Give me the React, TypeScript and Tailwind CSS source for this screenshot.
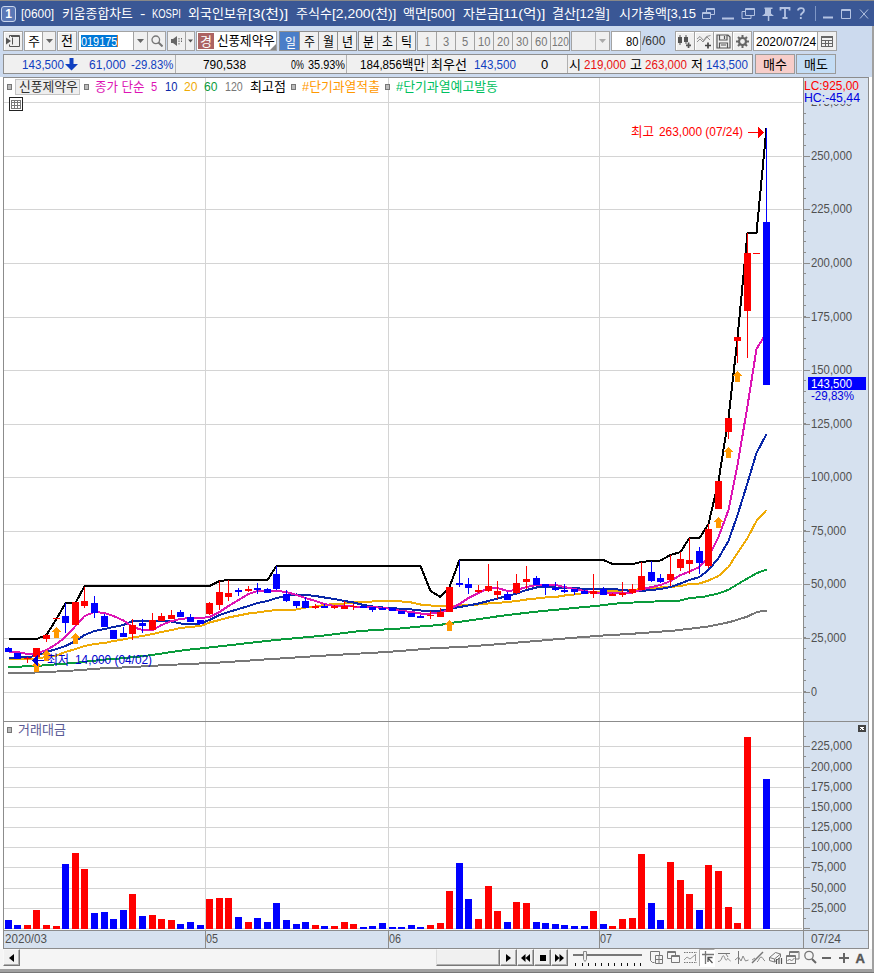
import React, { useLayoutEffect, useRef, useState } from 'react';
import { clsx } from 'clsx';

// Text squeezed or stretched to the width of its box, the way the fixed-pitch UI font sets it
function Fit({ className, children }: { className: string; children: string }) {
  const box = useRef<HTMLSpanElement>(null);
  const inner = useRef<HTMLSpanElement>(null);
  const [scale, setScale] = useState(1);

  useLayoutEffect(() => {
    if (box.current && inner.current) {
      setScale(box.current.clientWidth / inner.current.offsetWidth);
    }
  }, [children]);

  return (
    <span ref={box} className={clsx('block shrink-0 whitespace-pre', className)}>
      <span ref={inner} className="inline-block origin-left" style={{ transform: `scaleX(${scale})` }}>{children}</span>
    </span>
  );
}

const btn = 'flex items-center justify-center shrink-0 border border-[#a3a3a3] bg-[#f0f0f0] shadow-[inset_1px_1px_0_#fff]';

function Caret({ className }: { className?: string }) {
  return (
    <svg width="7" height="4" viewBox="0 0 7 4" className={clsx('shrink-0', className)}>
      <path d="M0 0h7L3.5 4z" fill="currentColor" />
    </svg>
  );
}

function TitleBar() {
  return (
    <div className="h-[25px] shrink-0 bg-[#3a5795] flex items-center text-white text-[13px] leading-[24px]">
      <div className="ml-[1px] w-[15px] h-[16px] mt-[1px] shrink-0 rounded-[3px] border border-[#c9d5ec] bg-[#5b78b6] flex items-center justify-center text-[12px] leading-none font-bold">1</div>
      <div className="flex ml-[5px] w-[676px] overflow-hidden shrink-0">
        <Fit className="w-[33px]">[0600]</Fit>
        <Fit className="ml-[8px] w-[71px]">키움종합차트</Fit>
        <Fit className="ml-[7px] w-[5px]">-</Fit>
        <Fit className="ml-[7px] w-[29px]">KOSPI</Fit>
        <Fit className="ml-[7px] w-[60px]">외국인보유</Fit>
        <Fit className="w-[40px]">[3(천)]</Fit>
        <Fit className="ml-[8px] w-[36px]">주식수</Fit>
        <Fit className="w-[64px]">[2,200(천)]</Fit>
        <Fit className="ml-[7px] w-[24px]">액면</Fit>
        <Fit className="w-[28px]">[500]</Fit>
        <Fit className="ml-[8px] w-[36px]">자본금</Fit>
        <Fit className="w-[46px]">[11(억)]</Fit>
        <Fit className="ml-[7px] w-[24px]">결산</Fit>
        <Fit className="w-[34px]">[12월]</Fit>
        <Fit className="ml-[9px] w-[48px]">시가총액</Fit>
        <Fit className="w-[29px]">[3,15</Fit>
      </div>
      <svg width="174" height="22" viewBox="698 3 174 22" className="ml-[1px] shrink-0" fill="none" stroke="#b4c3e2" strokeWidth="1">
        <path d="M706.5 12.5v-4h8v6h-4M706.5 9.5h8M702.5 12.5h8v6h-8zM702.5 13.5h8" />
        <path d="M722 18.5h12" strokeWidth="2" />
        <path d="M745.500 8.500h9v7h-9zM745.500 9.500h9M745 11.500h-3v7h9v-3" />
        <path d="M764 7.500h8v1.500h-1.500v4.500l3 2.500h-12l3-2.500V9H764zM767.300 15h1.500v6h-1.500z" fill="#b4c3e2" stroke="none" transform="translate(.5 0)" />
        <path d="M780.500 10.500v-2.500h9v2.500M785 8v10M782.500 18h5" strokeWidth="1.800" />
        <path d="M798 10.500c0-3 6-3.500 6 0 0 2.500-3.200 2.500-3.200 5M800.800 17v2" strokeWidth="1.800" />
        <path d="M815.500 6v15" stroke="#7f97c6" />
        <path d="M823 17.500h10" strokeWidth="2" />
        <path d="M841.500 9.500h9v9h-9zM841.500 10.500h9" />
        <path d="M860 9.500l8 9M868 9.500l-8 9" />
      </svg>
    </div>
  );
}

const periods = ['일', '주', '월', '년'];
const units = ['분', '초', '틱'];
const minutes = [
  { label: '1', w: 'w-[5px]' },
  { label: '3', w: 'w-[6px]' },
  { label: '5', w: 'w-[6px]' },
  { label: '10', w: 'w-[12px]' },
  { label: '20', w: 'w-[12px]' },
  { label: '30', w: 'w-[12px]' },
  { label: '60', w: 'w-[12px]' },
  { label: '120', w: 'w-[17px]' },
];

function Toolbar() {
  return (
    <div className="flex items-center h-[20px] ml-[3px] text-[13px] leading-[20px] text-black">
      <div className={clsx(btn, 'w-[20px] h-[20px]')}>
        <svg width="16" height="14" viewBox="0 0 16 14" fill="none" stroke="#555">
          <path d="M4.500 3.500v-2h10v11h-10v-2M6 2.500h8M7.500 3.500v7" />
          <path d="M1 3.500l5 3.500-5 3.500z" fill="#555" stroke="none" />
        </svg>
      </div>
      <div className="ml-[1px] flex h-[20px] w-[32px] border border-[#a3a3a3] bg-white">
        <Fit className="ml-[3px] w-[12px]">주</Fit>
        <div className="ml-auto w-[13px] bg-[#f0f0f0] border-l border-[#a3a3a3] flex items-center justify-center"><Caret className="text-[#666]" /></div>
      </div>
      <div className={clsx(btn, 'ml-[1px] w-[20px] h-[20px]')}>
        <Fit className="w-[12px]">전</Fit>
      </div>
      <div className="ml-[1px] flex items-center h-[20px] w-[88px] border border-[#a3a3a3] bg-white">
        <div className="ml-[2px] h-[12px] leading-[13px] bg-[#0078d7] text-white border-r border-[#e08030]"><Fit className="w-[36px]">019175</Fit></div>
        <div className="ml-auto w-[14px] h-full bg-[#f0f0f0] border-l border-[#a3a3a3] flex items-center justify-center"><Caret className="text-[#666]" /></div>
        <div className="w-[18px] h-full bg-[#f0f0f0] border-l border-[#a3a3a3] flex items-center justify-center">
          <svg width="12" height="12" viewBox="0 0 12 12" fill="none" stroke="#777" strokeWidth="1.300"><circle cx="4.800" cy="4.800" r="3.800" /><path d="M7.500 7.500l4 4" strokeWidth="2" /></svg>
        </div>
      </div>
      <div className="ml-[1px] flex h-[20px] w-[28px] border border-[#a3a3a3] bg-[#f0f0f0]">
        <div className="w-[17px] flex items-center justify-center">
          <svg width="12" height="10" viewBox="0 0 12 10" fill="#666"><path d="M0 3h2l4-3v10L2 7H0zM7.500 2h1v1.500h-1zM7.500 4.500h1V6h-1zM7.500 7h1v1.500h-1zM10 2h1v1.500h-1zM10 4.500h1V6h-1z" /></svg>
        </div>
        <div className="flex-1 border-l border-[#a3a3a3] flex items-center justify-center"><Caret className="text-[#555] w-[5px]" /></div>
      </div>
      <div className="relative ml-[1px] flex items-center h-[20px] w-[81px] border border-[#a3a3a3] bg-white">
        <div className="ml-px w-[16px] h-[16px] leading-[17px] bg-[#ac6363] text-white flex justify-center"><Fit className="w-[12px]">경</Fit></div>
        <Fit className="ml-[3px] w-[58px] -mt-px">신풍제약우</Fit>
        <span className="absolute right-0 bottom-0 border-l-[6px] border-l-transparent border-b-[6px] border-b-[#888]" />
      </div>
      <div className="ml-[2px] flex h-[20px] border border-[#8f8f8f]">
        {periods.map((p, i) => (
          <div key={p} className={clsx('h-full w-[19px] flex justify-center border-l', i === 0 ? 'bg-[#4a7ec8] text-white border-[#4a7ec8] pt-px' : 'bg-[#f0f0f0] border-[#8f8f8f]')}>
            <Fit className="w-[11px]">{p}</Fit>
          </div>
        ))}
      </div>
      <div className="ml-px flex h-[20px] border border-l-0 border-[#8f8f8f]">
        {units.map(u => (
          <div key={u} className="h-full w-[19px] flex justify-center border-l border-[#8f8f8f] bg-[#f0f0f0]">
            <Fit className="w-[11px]">{u}</Fit>
          </div>
        ))}
      </div>
      <div className="ml-px flex h-[20px] border border-l-0 border-[#8f8f8f]">
        {minutes.map(m => (
          <div key={m.label} className="h-full w-[19px] flex justify-center border-l border-[#a3a3a3] bg-[#f0f0f0] text-[#777]">
            <Fit className={m.w}>{m.label}</Fit>
          </div>
        ))}
      </div>
      <div className="ml-px flex h-[20px] w-[39px] border border-[#a3a3a3] bg-[#f0f0f0]">
        <div className="ml-auto w-[14px] border-l border-[#b8b8b8] flex items-center justify-center"><Caret className="text-[#aaa]" /></div>
      </div>
      <div className="ml-px h-[20px] w-[30px] border border-[#a3a3a3] bg-white flex justify-end pr-[2px]">
        <Fit className="w-[12px]">80</Fit>
      </div>
      <Fit className="ml-px w-[23px] text-[#333]">/600</Fit>
      <div className="ml-[10px] flex h-[20px]">
        <div className={clsx(btn, 'w-[20px]')}>
          <svg width="16" height="15" viewBox="0 0 16 15" fill="#555"><path d="M1 3h4v6H1zM2.500 1h1v10h-1zM7 3h4v5H7zM8.500 1h1v9h-1zM9 10.500h5v1.700H9zM10.700 8.500h1.700v5.500h-1.700z" /></svg>
        </div>
        <div className={clsx(btn, '-ml-px w-[20px]')}>
          <svg width="16" height="15" viewBox="0 0 16 15" fill="none" stroke="#777"><path d="M1 5l3-2.500 3.500 4 3-4 4-1M1 8l3-3 3 3 4-5 3 3" strokeWidth=".8" /><path d="M9 11.500h6M12 8.500v6" stroke="#444" strokeWidth="1.700" /></svg>
        </div>
        <div className={clsx(btn, '-ml-px w-[20px]')}>
          <svg width="15" height="15" viewBox="0 0 15 15" fill="none" stroke="#555" strokeWidth="1.200"><path d="M1 1h11l2 2v11H1zM3.500 1v5h7.500V1M3.500 14V9h8v5M5 11h5M8.500 2v3" /></svg>
        </div>
        <div className={clsx(btn, '-ml-px w-[20px]')}>
          <svg width="13" height="13" viewBox="0 0 13 13" fill="none" stroke="#666"><circle cx="6.500" cy="6.500" r="3.500" strokeWidth="2.200" /><path d="M6.500 0v3M6.500 10v3M0 6.500h3M10 6.500h3M2 2l2 2M9 9l2 2M2 11l2-2M9 4l2-2" strokeWidth="2" /></svg>
        </div>
      </div>
      <div className="ml-px flex h-[20px] w-[84px] border border-[#a3a3a3] bg-white">
        <Fit className="ml-[2px] w-[60px]">2020/07/24</Fit>
        <div className="ml-auto w-[19px] bg-[#f0f0f0] border-l border-[#a3a3a3] flex items-center justify-center">
          <svg width="12" height="11" viewBox="0 0 12 11" fill="none" stroke="#666" shapeRendering="crispEdges"><path d="M.5 1.500h11v9H.5zM.5 4.500h11M.5 7.500h11M4.500 4v6M7.500 4v6" /><path d="M0 1h12" strokeWidth="2" /></svg>
        </div>
      </div>
    </div>
  );
}

function QuoteRow() {
  return (
    <div className="flex h-[20px] ml-[3px] mt-[3px] text-[13px] leading-[20px] text-black">
      <div className="flex w-[750px] h-[20px] border border-[#8f8f8f] bg-[#f0f0f0]">
        <div className="flex w-[172px] border-r border-[#b0b0b0] text-[#1040c0]">
          <Fit className="ml-[18px] w-[42px]">143,500</Fit>
          <svg width="13" height="13" viewBox="0 0 13 13" className="ml-px mt-[3px] shrink-0"><path d="M4.500 0h4v6H13L6.500 12.500 0 6h4.500z" fill="#1040c0" /></svg>
          <Fit className="ml-[11px] w-[37px]">61,000</Fit>
          <Fit className="ml-[5px] w-[42px]">-29.83%</Fit>
        </div>
        <div className="flex w-[171px] border-r border-[#b0b0b0]">
          <Fit className="ml-[27px] w-[43px]">790,538</Fit>
          <Fit className="ml-[45px] w-[13px]">0%</Fit>
          <Fit className="ml-[4px] w-[37px]">35.93%</Fit>
        </div>
        <div className="flex w-[81px] border-r border-[#b0b0b0]">
          <Fit className="ml-[13px] w-[42px]">184,856</Fit>
          <Fit className="w-[23px]">백만</Fit>
        </div>
        <div className="flex w-[140px] border-r border-[#b0b0b0]">
          <Fit className="ml-[3px] w-[36px]">최우선</Fit>
          <Fit className="ml-[7px] w-[42px] text-[#1040c0]">143,500</Fit>
          <Fit className="ml-[25px] w-[7px]">0</Fit>
        </div>
        <div className="flex flex-1">
          <Fit className="ml-[1px] w-[12px]">시</Fit>
          <Fit className="ml-[3px] w-[42px] text-[#e81010]">219,000</Fit>
          <Fit className="ml-[4px] w-[12px]">고</Fit>
          <Fit className="ml-[3px] w-[42px] text-[#e81010]">263,000</Fit>
          <Fit className="ml-[4px] w-[12px]">저</Fit>
          <Fit className="ml-[3px] w-[42px] text-[#1040c0]">143,500</Fit>
        </div>
      </div>
      <div className="ml-[2px] w-[40px] h-[20px] border border-[#9a9a9a] bg-[#f7cdc9] flex justify-center"><Fit className="w-[24px]">매수</Fit></div>
      <div className="ml-px w-[40px] h-[20px] border border-[#9a9a9a] bg-[#c4ddf5] flex justify-center"><Fit className="w-[24px]">매도</Fit></div>
    </div>
  );
}

const UP = '#ff0000';
const DOWN = '#0000ff';

type Candle = [up: number, top: number, bottom: number, high: number, low: number, volumeTop: number];

// up?, body top/bottom, wick top/bottom, volume bar top
const candles: Candle[] = [
  [0, 648, 652, 647, 652, 920], [0, 653, 659, 653, 659, 925], [1, 658, 659, 657, 663, 925], [1, 648, 657, 648, 657, 910],
  [1, 635, 639, 634, 642, 925], [1, 618, 619, 618, 619, 926], [0, 616, 623, 603, 633, 864], [1, 602, 625, 602, 625, 853],
  [1, 601, 606, 587, 608, 869], [0, 603, 613, 596, 618, 913], [0, 616, 627, 614, 627, 912], [0, 630, 639, 630, 639, 919],
  [0, 633, 637, 627, 637, 910], [1, 625, 634, 619, 640, 894], [0, 623, 626, 619, 633, 916], [1, 620, 630, 613, 630, 915],
  [1, 616, 621, 613, 621, 919], [1, 615, 619, 610, 619, 920], [0, 612, 617, 610, 617, 924], [0, 617, 622, 614, 622, 922],
  [0, 620, 624, 620, 624, 925], [1, 603, 614, 602, 615, 899], [1, 592, 605, 581, 610, 898], [1, 593, 597, 580, 601, 898],
  [0, 590, 592, 588, 596, 917], [1, 589, 591, 586, 592, 922], [0, 588, 590, 583, 594, 918], [0, 589, 593, 588, 593, 922],
  [0, 574, 589, 566, 590, 903], [0, 594, 601, 590, 602, 920], [0, 601, 606, 601, 608, 924], [0, 601, 608, 597, 608, 922],
  [1, 606, 608, 604, 609, 925], [0, 606, 608, 604, 608, 926], [1, 606, 608, 605, 609, 926], [1, 606, 609, 601, 609, 922],
  [1, 606, 607, 604, 610, 924], [0, 606, 608, 606, 608, 927], [0, 607, 610, 607, 612, 926], [0, 608, 610, 607, 610, 923],
  [0, 608, 611, 608, 611, 927], [0, 611, 614, 611, 614, 927], [0, 613, 617, 613, 617, 925], [0, 616, 618, 615, 618, 927],
  [1, 615, 616, 611, 619, 925], [1, 612, 617, 608, 617, 923], [1, 587, 612, 587, 612, 891], [0, 583, 585, 560, 587, 863],
  [0, 584, 588, 578, 594, 899], [1, 590, 592, 585, 593, 919], [1, 586, 591, 564, 592, 886], [1, 591, 595, 581, 599, 911],
  [0, 594, 600, 592, 600, 922], [1, 583, 593, 574, 594, 902], [1, 579, 582, 566, 589, 903], [0, 578, 585, 576, 585, 922],
  [0, 584, 587, 584, 595, 923], [0, 588, 590, 582, 591, 924], [0, 590, 592, 584, 593, 925], [0, 589, 592, 589, 595, 926],
  [0, 591, 594, 589, 594, 926], [1, 591, 594, 574, 598, 911], [0, 589, 595, 587, 595, 924], [1, 594, 596, 593, 596, 926],
  [1, 593, 595, 582, 597, 919], [1, 589, 593, 584, 594, 918], [1, 576, 590, 562, 590, 854], [0, 572, 581, 561, 582, 903],
  [0, 578, 582, 574, 583, 920], [1, 574, 580, 555, 586, 862], [1, 559, 568, 552, 571, 880], [1, 560, 564, 538, 574, 894],
  [0, 551, 563, 547, 574, 910], [1, 529, 566, 524, 568, 865], [1, 481, 509, 481, 509, 871], [1, 418, 432, 418, 439, 907],
  [1, 337, 341, 337, 363, 923], [1, 253, 311, 233, 358, 737], [1, 253, 254, 253, 254, 929], [0, 222, 385, 128, 385, 779],
];

const left = (i: number) => Math.floor(5 + i * 9.6 + 0.001);

const perCandle = (ys: number[]) => ys.map((y, i) => `${left(i) + 3.5},${y}`).join(' ');

const ma5 = perCandle([
  651.5, 652, 654, 653.5, 650, 644, 637, 626, 616, 612, 613, 616, 620.5, 627, 630, 630, 625, 621, 619, 618,
  618, 617, 612, 606, 600, 594, 591, 591, 591, 592, 595, 598, 601, 604, 606, 606, 606.5, 606.5, 607, 608,
  609, 611, 612, 613.5, 613.5, 613, 609, 604, 598, 593, 588, 588, 591, 590, 587, 585, 585, 585, 587, 589,
  591, 592.5, 592.5, 592.5, 592.5, 592.5, 589.5, 587, 585, 581, 575, 571.5, 567, 557, 537, 510, 465, 406, 349, 333,
]);
const ma10 = perCandle([
  657.5, 657.5, 657, 656, 652, 649, 646, 641, 635, 631, 629, 627, 625, 621, 621, 621, 621, 621.5, 623.5, 624,
  623.5, 620, 615, 612, 609, 606, 603, 601, 598, 596, 594.5, 595, 596, 597.5, 599, 601, 602.5, 605, 606.5, 607.5,
  608, 609, 609.5, 610.5, 611, 610.5, 609, 607, 605.5, 603.5, 601, 598.5, 596, 593.5, 590, 587.5, 587, 587.5, 588, 588,
  589, 589, 589, 589, 590, 591, 591, 590, 589, 587, 583.5, 580, 577, 570, 558, 541, 515, 483, 453, 434,
]);
const ma20 = perCandle([
  659, 659, 659, 658.5, 657, 655.5, 652, 649, 646, 644, 643, 641, 639.5, 637.5, 636, 634, 632, 630, 628, 627,
  626, 622.5, 620, 617.5, 615.5, 613.5, 612.5, 611, 610, 610, 609.5, 607.5, 606.5, 605, 604, 603.5, 602.5, 602, 601.5, 601,
  601, 601.5, 602.5, 604.5, 605.5, 606, 606, 605.5, 605, 604.5, 603.5, 603, 602, 601, 599.5, 598.5, 597.5, 597, 595.5, 594.5,
  593, 592, 591.5, 591, 590.5, 590, 589, 588, 587.5, 587, 586, 584, 583.5, 580.5, 576, 567, 553, 538, 521, 510,
]);
const highest = perCandle([
  639, 639, 639, 639, 635, 619, 603, 603, 586, 586, 586, 586, 586, 586, 586, 586, 586, 586, 586, 586,
  586, 586, 581, 580, 580, 580, 580, 580, 566, 566, 566, 566, 566, 566, 566, 566, 566, 566, 566, 566,
  566, 566, 566, 566, 591, 597, 587, 560, 560, 560, 560, 560, 560, 560, 560, 560, 560, 560, 560, 560,
  560, 560, 560, 564, 564, 564, 562, 561, 560.5, 555, 552, 538, 538, 524, 481, 418, 338, 233, 233, 128,
]);
const ma60 = '8,667 36,666 60,664 75,663 100,660 125,658 145,656 165,653 185,650 205,648 240,644 275,640 320,636 360,631 400,628.5 420,626.5 440,625 450,623 466,621 500,616 533,612 567,608.7 600,605.5 617,603.500 642,602 680,600.500 690,598 703,597 718,593.500 728,590 743,581 757,573 767,569.500';
const ma120 = '8,673 36,672.500 67,671 100,668.500 133,667 167,665 220,662.500 257,660 310,656.500 343,654.500 387,652 433,648.300 467,646.600 500,644 533,641.300 567,638.300 600,635.700 633,633.700 673,630.700 707,626.700 730,622 747,616.700 757,612 767,610.500';

const priceGrid = [
  { y: 102, label: '' }, { y: 156, label: '250,000' }, { y: 209, label: '225,000' }, { y: 263, label: '200,000' },
  { y: 317, label: '175,000' }, { y: 370, label: '150,000' }, { y: 424, label: '125,000' }, { y: 477, label: '100,000' },
  { y: 531, label: '75,000' }, { y: 584, label: '50,000' }, { y: 638, label: '25,000' }, { y: 692, label: '0' },
];
const volumeGrid = [
  { y: 746, label: '225,000' }, { y: 767, label: '200,000' }, { y: 787, label: '175,000' }, { y: 807, label: '150,000' },
  { y: 827, label: '125,000' }, { y: 847, label: '100,000' }, { y: 867, label: '75,000' }, { y: 888, label: '50,000' },
  { y: 908, label: '25,000' },
];
const priceMinor = Array.from({ length: 57 }, (_, i) => Math.round(112.7 + i * 10.71)).filter(y => y < 718);
const months = [{ x: 205, label: '05' }, { x: 388, label: '06' }, { x: 599, label: '07' }];
const signals = [[3, 661], [4, 650], [5, 627], [7, 633], [46, 620], [74, 517], [75, 447], [76, 371]];

function AxisLabel({ x, y, children, fill = '#505050' }: { x: number; y: number; children: string; fill?: string }) {
  return (
    <text x={x} y={y} fill={fill} textLength={children.length * 6 - (children.includes(',') ? 1 : 0)} lengthAdjust="spacingAndGlyphs">{children}</text>
  );
}

function Chart() {
  return (
    <svg width="866" height="872" viewBox="3 77 866 872" className="block text-[13px]" shapeRendering="crispEdges">
      <rect x="3" y="77" width="866" height="872" fill="#fff" />
      <rect x="804" y="78" width="64" height="870" fill="#d6e1ef" />
      <rect x="4" y="931" width="864" height="17" fill="#d6e1ef" />

      <g fill="#d4d4d4">
        {[...priceGrid, ...volumeGrid, { y: 928, label: '' }].map(g => <rect key={g.y} x="4" y={g.y} width="798" height="1" />)}
        {months.map(m => <rect key={m.x} x={m.x} y="78" width="1" height="852" />)}
      </g>

      <g fill="none" strokeWidth="2">
        <polyline points={ma120} stroke="#777" />
        <polyline points={ma60} stroke="#0a9b3c" />
        <polyline points={ma20} stroke="#efab06" />
        <polyline points={ma10} stroke="#0a28a8" />
        <polyline points={ma5} stroke="#dc14b4" />
        <polyline points={highest} stroke="#000" />
      </g>

      {candles.map(([up, top, bottom, high, low, vol], i) => (
        <g key={i} fill={up ? UP : DOWN}>
          <rect x={left(i) + 3} y={high} width="1" height={low - high} />
          <rect x={left(i)} y={top} width="7" height={bottom - top} />
          <rect x={left(i)} y={vol} width="7" height={929 - vol} />
        </g>
      ))}

      {signals.map(([i, y]) => (
        <path key={i} d={`M${left(i) + 3.5} ${y}l5 5h-2.500v6h-5v-6h-2.500z`} fill="#ff9900" />
      ))}

      <g fill="#ff0000">
        <text x="631" y="136" textLength="23" lengthAdjust="spacingAndGlyphs">최고</text>
        <text x="659" y="136" textLength="84" lengthAdjust="spacingAndGlyphs">263,000 (07/24)</text>
        <path d="M748 132h10v-5l6 5.500-6 5.500v-5h-10z" />
      </g>
      <g fill="#0000d0">
        <text x="47" y="664" textLength="22" lengthAdjust="spacingAndGlyphs">최저</text>
        <text x="75" y="664" textLength="77" lengthAdjust="spacingAndGlyphs">14,000 (04/02)</text>
        <path d="M44 660h-6v-5l-6 5.500 6 5.500v-5h6z" />
      </g>

      <g fill="#8c8c8c">
        <path d="M3 77h866v1H3zM3 77h1v872H3zM868 77h1v872h-1zM3 948h866v1H3zM3 721h866v1H3zM3 930h866v1H3zM803 77h1v854h-1z" />
        {[...priceGrid, ...volumeGrid].map(g => <rect key={g.y} x="804" y={g.y} width="6" height="1" />)}
        {priceMinor.map(y => <rect key={y} x="804" y={y} width="2" height="1" />)}
        {[736, ...volumeGrid.map(g => g.y + 10)].map(y => <rect key={y} x="804" y={y} width="2" height="1" />)}
        <rect x="804" y="928" width="6" height="1" />
        {[...months.map(m => m.x), 803].map(x => <rect key={x} x={x} y="931" width="1" height="17" />)}
      </g>

      {[...priceGrid, ...volumeGrid].filter(g => g.label).map(g => (
        <AxisLabel key={g.y} x={811} y={g.y + 4}>{g.label}</AxisLabel>
      ))}
      {/* the top scale label disappears under the LC/HC readout */}
      <AxisLabel x={811} y={106}>275,000</AxisLabel>
      <rect x="804" y="78" width="64" height="26" fill="#d6e1ef" />
      <text x="804" y="90" fontSize="12" fill="#ff0000" textLength="55" lengthAdjust="spacingAndGlyphs">LC:925,00</text>
      <text x="804" y="102" fontSize="12" fill="#0000e0" textLength="56" lengthAdjust="spacingAndGlyphs">HC:-45,44</text>
      <rect x="808" y="377" width="58" height="13" fill="#0000ff" />
      <AxisLabel x={811} y={388} fill="#fff">143,500</AxisLabel>
      <text x="811" y="400" fontSize="12" fill="#0000e0" textLength="43" lengthAdjust="spacingAndGlyphs">-29,83%</text>

      <AxisLabel x={5} y={943}>2020/03</AxisLabel>
      {months.map(m => <AxisLabel key={m.x} x={m.x + 1} y={943}>{m.label}</AxisLabel>)}
      <AxisLabel x={811} y={943}>07/24</AxisLabel>

      <rect x="858" y="725" width="8" height="7" fill="#444" />
      <path d="M860 727l4 3M864 727l-4 3" stroke="#fff" />
    </svg>
  );
}

function Dot({ className }: { className?: string }) {
  return <span className={clsx('block shrink-0 w-[5px] h-[6px] border border-[#777] bg-[#bbb]', className)} />;
}

function Legend() {
  return (
    <div className="absolute left-[4px] top-[1px] flex items-center h-[17px] text-[13px] leading-[15px]">
      <Dot />
      <div className="ml-[3px] w-[65px] h-[16px] border border-[#c4c4c4] bg-[#eee] text-[#333] flex pl-[3px] leading-[14px]"><Fit className="w-[59px]">신풍제약우</Fit></div>
      <Dot className="ml-[4px]" />
      <Fit className="ml-[6px] w-[49px] text-[#dc14b4]">종가 단순</Fit>
      <Fit className="ml-[7px] w-[6px] text-[#dc14b4]">5</Fit>
      <Fit className="ml-[8px] w-[12px] text-[#0a28a8]">10</Fit>
      <Fit className="ml-[7px] w-[13px] text-[#efab06]">20</Fit>
      <Fit className="ml-[7px] w-[13px] text-[#0a9b3c]">60</Fit>
      <Fit className="ml-[8px] w-[18px] text-[#777]">120</Fit>
      <Fit className="ml-[7px] w-[36px] text-black">최고점</Fit>
      <Dot className="ml-[5px]" />
      <Fit className="ml-[6px] w-[78px] text-[#ff9900]">#단기과열적출</Fit>
      <Dot className="ml-[5px]" />
      <Fit className="ml-[6px] w-[102px] text-[#00c060]">#단기과열예고발동</Fit>
    </div>
  );
}

const navBtn = 'flex items-center justify-center shrink-0 w-[17px] h-[17px] bg-[#f0f0f0] border border-t-[#f8f8f8] border-l-[#f8f8f8] border-r-[#777] border-b-[#777] shadow-[inset_-1px_-1px_0_#b0b0b0]';

function BottomBar() {
  return (
    <div className="flex h-[20px] shrink-0 bg-[#f5f5f5] pl-[3px]">
      <button className={navBtn}><svg width="5" height="8" viewBox="0 0 5 8"><path d="M5 0v8L0 4z" /></svg></button>
      <div className="ml-[416px] w-[64px] h-[17px] bg-[#f0f0f0] border border-t-[#f8f8f8] border-l-[#ddd] border-r-[#777] border-b-[#777] shadow-[inset_-1px_-1px_0_#b0b0b0]" />
      <button className={navBtn}><svg width="5" height="8" viewBox="0 0 5 8"><path d="M0 0v8l5-4z" /></svg></button>
      <button className={navBtn}><svg width="9" height="8" viewBox="0 0 9 8"><path d="M4.500 0v8L0 4zM9 0v8L4.500 4z" /></svg></button>
      <button className={navBtn}><svg width="6" height="6" viewBox="0 0 6 6"><path d="M0 0h6v6H0z" /></svg></button>
      <button className={navBtn}><svg width="9" height="8" viewBox="0 0 9 8"><path d="M0 0v8l4.500-4zM4.500 0v8L9 4z" /></svg></button>
      <svg width="304" height="20" viewBox="568 949 304 20" className="shrink-0" fill="none" stroke="#777">
        <path d="M573 954.500h69" stroke="#777" strokeWidth="2" shapeRendering="crispEdges" />
        <path d="M575.500 963v3M582.500 963v3M588.500 963v3M595.500 963v3M601.500 963v3M608.500 963v3M614.500 963v3M621.500 963v3M627.500 963v3M634.500 963v3M640.500 963v3" stroke="#111" shapeRendering="crispEdges" />
        <path d="M583.500 951.500h3v8l-1.500 2-1.500-2z" fill="#f0f0f0" stroke="#888" />
        {/* new window, overlap, scatter */}
        <path d="M654.500 962.500h-2l-2-2v-9h9v4M655.500 955.500h7v8h-7zM659 956v7M656 959.500h7" />
        <path d="M667.500 951.500h8v7h-8zM667.500 952.500h8" />
        <path d="M671.500 955.500h8v7h-8zM671.500 956.500h8" fill="#f5f5f5" />
        <path d="M684 952.500h13M684 962.500h13" strokeDasharray="1.500 1" />
        <path d="M695.500 954v7M684 960l3-3 3 2 5-4" stroke="#999" />
        {/* pressed crosshair tool */}
        <rect x="700" y="949" width="15" height="18" fill="#fff" stroke="none" />
        <path d="M699.500 966v-16.500h15" stroke="#aaa" />
        <path d="M702 954.500h12M705.500 951v13" strokeWidth="1.300" />
        <path d="M712.500 963l-4.500-5M708 962v-4.500h4.500" stroke="#555" strokeWidth="1.300" />
        <path d="M718 953.500h12" />
        <path d="M718 961.500c2 0 3-1 4-4s2-2 3 1 2 1 2.500 0 1.500 2 3 2.500M726 954l2 3" stroke="#888" />
        <path d="M738.500 951v13" />
        <path d="M735 960l3.500-3 2.500 4 2-5 2.500 5 3-1" stroke="#888" />
        <path d="M752 963l11-11" strokeWidth="1.500" />
        <path d="M752 960l3-2M757 962c2-1 2-5 4-5s2 3 4 4" stroke="#888" />
        <path d="M769.500 957.500l6-5 5 1.500v3l-6 5-5-1.500zM769.500 957.500l5 1.500v3M774.500 959l6-5" />
        <path d="M776.500 959v5M779 958v6M781.500 958v6" stroke="#555" strokeWidth="1.200" />
        <path d="M789.500 955v-3.500h9.500v7.500h-3M786.500 955.500h9v8h-9zM786.500 956.500h9M787.500 961l2-2 2 2 3-3M789.500 952.500h9" />
        <circle cx="809" cy="955.500" r="4.200" strokeWidth="1.300" />
        <path d="M812 959l4 4M822 958h9M839 958h10M844 953v10" strokeWidth="2" stroke="#666" />
        <text x="855.500" y="963" fontSize="13" fontWeight="bold" fill="#555" stroke="#555" strokeWidth=".4">A</text>
      </svg>
    </div>
  );
}

export default function App() {
  return (
    <div className="w-[874px] h-[973px] overflow-hidden flex flex-col bg-white border-t border-[#888] font-['Liberation_Sans','Noto_Sans_CJK_KR',sans-serif]">
      <TitleBar />
      <div className="flex-1 flex min-h-0">
        <div className="flex-1 min-w-0 flex flex-col">
          <div className="h-[51px] shrink-0 pt-[5px] bg-[#ccdaee]">
            <Toolbar />
            <QuoteRow />
          </div>
          <div className="relative ml-[3px] w-[866px] h-[872px] shrink-0">
            <Chart />
            <Legend />
            <svg width="14" height="14" viewBox="0 0 14 14" className="absolute left-[6px] top-[20px]" fill="none" shapeRendering="crispEdges">
              <rect x=".5" y=".5" width="13" height="13" fill="#fff" stroke="#222" />
              <path d="M2.500 3.500h9v8h-9zM2.500 5.500h9M2.500 8.500h9M5.500 3v8M8.500 3v8" stroke="#777" />
            </svg>
            <div className="absolute left-[4px] top-[645px] h-[16px] flex items-center text-[13px] leading-[16px] text-[#5a5a96]">
              <Dot />
              <Fit className="ml-[6px] w-[48px]">거래대금</Fit>
            </div>
          </div>
          <BottomBar />
        </div>
        <div className="w-[2px] bg-[#a0a0a0]" />
      </div>
      <div className="h-[4px] shrink-0 bg-[#a0a0a0] border-b border-[#777]" />
    </div>
  );
}
